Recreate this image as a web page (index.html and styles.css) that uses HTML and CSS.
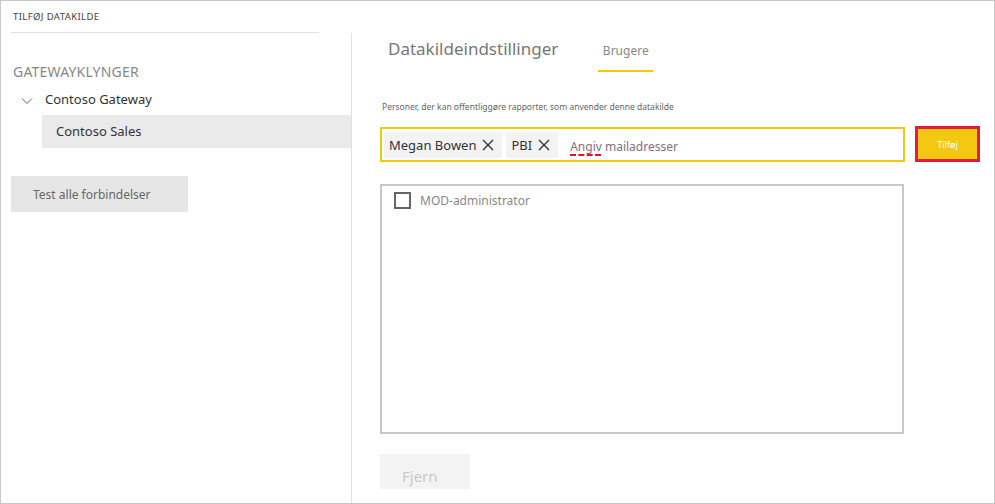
FILE: index.html
```html
<!DOCTYPE html>
<html>
<head>
<meta charset="utf-8">
<link rel="stylesheet" href="styles.css">
</head>
<body>
<div class="frame">
  <div class="left">
    <div class="title">TILFØJ DATAKILDE</div>
    <div class="title-line"></div>
    <div class="section">GATEWAYKLYNGER</div>
    <div class="gateway">
      <svg class="chev" width="12" height="8" viewBox="0 0 12 8"><path d="M1 1.5 L6 6.5 L11 1.5" fill="none" stroke="#666" stroke-width="1"/></svg>
      <span>Contoso Gateway</span>
    </div>
    <div class="source">Contoso Sales</div>
    <button class="test-btn">Test alle forbindelser</button>
  </div>
  <div class="right">
    <div class="tabs">
      <div class="heading">Datakildeindstillinger</div>
      <div class="tab">Brugere</div>
    </div>
    <div class="desc">Personer, der kan offentliggøre rapporter, som anvender denne datakilde</div>
    <div class="add-row">
      <div class="input">
        <span class="chip">Megan Bowen <svg width="12" height="12" viewBox="0 0 12 12"><path d="M1 1 L11 11 M11 1 L1 11" stroke="#333" stroke-width="1.4"/></svg></span>
        <span class="chip">PBI <svg width="12" height="12" viewBox="0 0 12 12"><path d="M1 1 L11 11 M11 1 L1 11" stroke="#333" stroke-width="1.4"/></svg></span>
        <span class="placeholder"><span class="spell">Angiv</span> mailadresser</span>
      </div>
      <button class="add-btn">Tilføj</button>
    </div>
    <div class="list">
      <div class="item"><span class="box"></span>MOD-administrator</div>
    </div>
    <button class="remove-btn">Fjern</button>
  </div>
</div>
</body>
</html>
```
FILE: styles.css
```css
* { box-sizing: border-box; }
html, body { margin: 0; padding: 0; background: #fff; }
body { font-family: "Noto Sans", "Open Sans", sans-serif; }
.frame {
  width: 995px; height: 504px;
  border: 1px solid #c8c8c8;
  display: flex;
}
.left {
  width: 350px;
  display: flex; flex-direction: column;
  align-items: flex-start;
}
.title {
  font-size: 9.5px; color: #444; letter-spacing: 0.4px;
  padding: 9px 0 0 12px; height: 31px;
}
.title-line { width: 308px; height: 1px; background: #e1e1e1; margin-left: 10px; }
.section { font-size: 14px; color: #888; margin: 30px 0 0 12px; line-height: 18px; letter-spacing: 0.2px; }
.gateway {
  display: flex; align-items: center; margin: 9px 0 0 20px;
  font-size: 13px; color: #333; line-height: 18px;
}
.chev { margin: 4px 12px 0 0; }
.source {
  margin: 7px 0 0 41px; width: 309px; height: 33px;
  background: #eaeaea; font-size: 13px; color: #333;
  padding: 7px 0 0 14px;
}
.test-btn {
  margin: 28px 0 0 10px; width: 177px; height: 36px;
  border: none; background: #e6e6e6; color: #666;
  font-family: inherit; font-size: 12px; padding: 0 0 0 22px; text-align: left;
}
.right {
  flex: 1;
  margin-top: 32px;
  border-left: 1px solid #e1e1e1;
  padding-left: 28px;
  display: flex; flex-direction: column; align-items: flex-start;
}
.tabs { display: flex; align-items: flex-start; margin-left: 8px; }
.heading { font-size: 17px; color: #777; padding-top: 3px; line-height: 26px; }
.tab {
  font-size: 12px; color: #888; margin-left: 40px; width: 55px; text-align: center;
  padding-top: 9px; height: 39px; border-bottom: 2px solid #f2c811;
}
.desc { font-size: 8.5px; color: #666; margin: 29px 0 0 2px; }
.add-row { display: flex; margin-top: 15px; align-items: flex-start; }
.input {
  width: 525px; height: 35px; border: 2px solid #f2c811;
  display: flex; align-items: center; gap: 4px; padding-left: 2px;
}
.chip {
  background: #f3f3f3; height: 26px; display: flex; align-items: center;
  font-size: 13px; color: #333; padding: 0 8px 0 5px; gap: 6px;
}
.placeholder { font-size: 12px; color: #8a6d80; margin: 4px 0 0 8px; }
.spell { text-decoration: underline dashed #e81123; text-decoration-thickness: 2px; text-underline-offset: 3px; }
.add-btn {
  margin-left: 10px; margin-top: -1px;
  width: 65px; height: 36px;
  background: #f2c811; border: 3px solid #e8193e;
  color: #fff; font-family: inherit; font-size: 9px; padding: 0;
}
.list {
  margin-top: 22px; width: 524px; height: 250px;
  border: 2px solid #c8c8c8; padding: 6px 0 0 12px;
}
.item { display: flex; align-items: center; font-size: 12px; color: #888; gap: 9px; }
.box { width: 17px; height: 17px; border: 2px solid #666; }
.remove-btn {
  margin-top: 20px; width: 90px; height: 35px;
  background: #f3f3f3; border: none; color: #c8c8c8;
  font-family: inherit; font-size: 15px; padding: 8px 0 0 22px; text-align: left;
}
```
